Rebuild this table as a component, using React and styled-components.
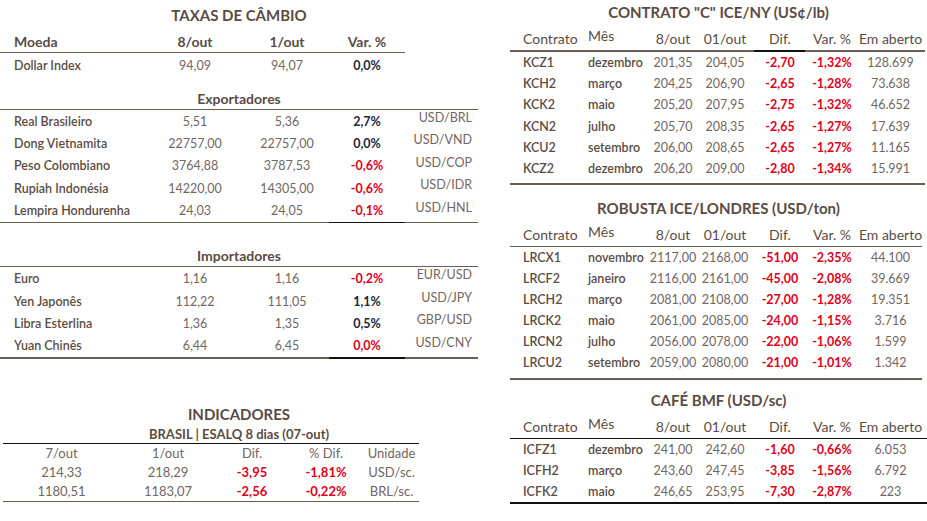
import styled, { createGlobalStyle } from "styled-components";

const BROWN = "#6b5d52";
const TEXT = "#5a4c44";
const GREY = "#72665f";
const RED = "#e0001a";
const NAVY = "#1c2838";

const GlobalStyle = createGlobalStyle`
  body {
    margin: 0;
    background: #fff;
    font-family: Lato, "Noto Sans", sans-serif;
    color: ${TEXT};
  }
`;

const Page = styled.div`
  width: 927px;
  height: 521px;
  display: flex;
  overflow: hidden;
`;

const LeftPanel = styled.div`
  width: 478px;
  display: flex;
  flex-direction: column;
`;

const RightPanel = styled.div`
  width: 417px;
  margin-left: 32px;
  display: flex;
  flex-direction: column;
`;

const PanelTitle = styled.div`
  height: ${(p) => p.$h}px;
  line-height: ${(p) => p.$h}px;
  margin-top: ${(p) => p.$mt || 0}px;
  text-align: center;
  font-size: 15px;
  font-weight: 700;
  white-space: nowrap;
`;

const SubTitle = styled.div`
  height: 18px;
  line-height: 18px;
  text-align: center;
  font-size: 13px;
  font-weight: 700;
`;

const GroupTitle = styled.div`
  height: 20px;
  line-height: 20px;
  margin-top: ${(p) => p.$mt}px;
  text-align: center;
  font-size: 14px;
  font-weight: 700;
  border-bottom: 1.5px solid ${BROWN};
`;

const Rule = styled.div`
  display: flex;
  height: 1.5px;
  width: ${(p) => p.$w || "auto"};
`;

const Seg = styled.div`
  height: 100%;
  width: ${(p) => p.$w}px;
  flex: ${(p) => (p.$w ? "none" : "1")};
  background: ${(p) => p.$c};
`;

/* câmbio */
const FxRow = styled.div`
  display: grid;
  grid-template-columns: 136px 90px 94px 66px 72px;
  padding-left: 14px;
  height: ${(p) => p.$h || 22.4}px;
  align-items: center;
  font-size: 12.5px;
`;

const FxHead = styled(FxRow)`
  width: 405px;
  box-sizing: border-box;
  font-size: 14px;
  font-weight: 700;
  border-bottom: 1.5px solid ${BROWN};
  align-items: end;
  line-height: 20px;
`;

const Name = styled.div`
  font-weight: 600;
  white-space: nowrap;
`;

const Num = styled.div`
  text-align: center;
  color: ${GREY};
`;

const HeadCell = styled.div`
  text-align: ${(p) => p.$align || "center"};
`;

const Var = styled.div`
  text-align: center;
  font-weight: 700;
  color: ${(p) => p.$c};
`;

const Unit = styled.div`
  text-align: right;
  color: ${GREY};
  align-self: start;
  line-height: 16px;
`;

/* indicadores */
const IndTable = styled.div`
  width: 416px;
  margin-left: 3px;
  border-top: 1.5px solid #111;
  border-bottom: 1.5px solid ${BROWN};
`;

const IndRow = styled.div`
  display: grid;
  grid-template-columns: 117px 96px 72px 76px 55px;
  height: 19px;
  align-items: center;
  font-size: 13px;
  color: ${GREY};
  text-align: center;
`;

const IndRed = styled.div`
  color: ${RED};
  font-weight: 700;
`;

/* contratos */
const CtRow = styled.div`
  display: grid;
  grid-template-columns: 65px 60px 50px 54px 56px 48px 69px;
  padding-left: 13px;
  height: ${(p) => p.$h || 21.3}px;
  align-items: center;
  font-size: 12.5px;
`;

const CtHead = styled(CtRow)`
  font-size: 14px;
  margin-top: 4px;
  height: 22px;
  line-height: 20px;
  white-space: nowrap;
`;

const Code = styled.div`
  font-weight: 600;
  white-space: nowrap;
`;

const Month = styled.div`
  font-weight: 600;
  white-space: nowrap;
`;

const Raised = styled.div`
  align-self: start;
  line-height: 16px;
`;

const CtRed = styled.div`
  text-align: center;
  color: ${RED};
  font-weight: 700;
`;

const CtBody = styled.div`
  padding-bottom: ${(p) => p.$pb}px;
`;

const exporters = [
  ["Real Brasileiro", "5,51", "5,36", "2,7%", NAVY, "USD/BRL"],
  ["Dong Vietnamita", "22757,00", "22757,00", "0,0%", NAVY, "USD/VND"],
  ["Peso Colombiano", "3764,88", "3787,53", "-0,6%", RED, "USD/COP"],
  ["Rupiah Indonésia", "14220,00", "14305,00", "-0,6%", RED, "USD/IDR"],
  ["Lempira Hondurenha", "24,03", "24,05", "-0,1%", RED, "USD/HNL"],
];

const importers = [
  ["Euro", "1,16", "1,16", "-0,2%", RED, "EUR/USD"],
  ["Yen Japonês", "112,22", "111,05", "1,1%", NAVY, "USD/JPY"],
  ["Libra Esterlina", "1,36", "1,35", "0,5%", NAVY, "GBP/USD"],
  ["Yuan Chinês", "6,44", "6,45", "0,0%", RED, "USD/CNY"],
];

const iceNy = [
  ["KCZ1", "dezembro", "201,35", "204,05", "-2,70", "-1,32%", "128.699"],
  ["KCH2", "março", "204,25", "206,90", "-2,65", "-1,28%", "73.638"],
  ["KCK2", "maio", "205,20", "207,95", "-2,75", "-1,32%", "46.652"],
  ["KCN2", "julho", "205,70", "208,35", "-2,65", "-1,27%", "17.639"],
  ["KCU2", "setembro", "206,00", "208,65", "-2,65", "-1,27%", "11.165"],
  ["KCZ2", "dezembro", "206,20", "209,00", "-2,80", "-1,34%", "15.991"],
];

const robusta = [
  ["LRCX1", "novembro", "2117,00", "2168,00", "-51,00", "-2,35%", "44.100"],
  ["LRCF2", "janeiro", "2116,00", "2161,00", "-45,00", "-2,08%", "39.669"],
  ["LRCH2", "março", "2081,00", "2108,00", "-27,00", "-1,28%", "19.351"],
  ["LRCK2", "maio", "2061,00", "2085,00", "-24,00", "-1,15%", "3.716"],
  ["LRCN2", "julho", "2056,00", "2078,00", "-22,00", "-1,06%", "1.599"],
  ["LRCU2", "setembro", "2059,00", "2080,00", "-21,00", "-1,01%", "1.342"],
];

const bmf = [
  ["ICFZ1", "dezembro", "241,00", "242,60", "-1,60", "-0,66%", "6.053"],
  ["ICFH2", "março", "243,60", "247,45", "-3,85", "-1,56%", "6.792"],
  ["ICFK2", "maio", "246,65", "253,95", "-7,30", "-2,87%", "223"],
];

const FxRows = ({ rows }) =>
  rows.map((r) => (
    <FxRow key={r[0]}>
      <Name>{r[0]}</Name>
      <Num>{r[1]}</Num>
      <Num>{r[2]}</Num>
      <Var $c={r[4]}>{r[3]}</Var>
      <Unit>{r[5]}</Unit>
    </FxRow>
  ));

const SplitRule = () => (
  <Rule>
    <Seg $w={329} $c={BROWN} />
    <Seg $w={76} $c="#111" />
    <Seg $c={BROWN} />
  </Rule>
);

const CtHeader = () => (
  <CtHead>
    <HeadCell $align="left">Contrato</HeadCell>
    <Raised>Mês</Raised>
    <HeadCell>8/out</HeadCell>
    <HeadCell>01/out</HeadCell>
    <HeadCell>Dif.</HeadCell>
    <HeadCell>Var. %</HeadCell>
    <HeadCell>Em aberto</HeadCell>
  </CtHead>
);

const CtRows = ({ rows, h }) =>
  rows.map((r) => (
    <CtRow key={r[0]} $h={h}>
      <Code>{r[0]}</Code>
      <Month>{r[1]}</Month>
      <Num>{r[2]}</Num>
      <Num>{r[3]}</Num>
      <CtRed>{r[4]}</CtRed>
      <CtRed>{r[5]}</CtRed>
      <Num>{r[6]}</Num>
    </CtRow>
  ));

const App = () => (
  <Page>
    <GlobalStyle />
    <LeftPanel>
      <PanelTitle $h={30}>TAXAS DE CÂMBIO</PanelTitle>
      <FxHead $h={23}>
        <HeadCell $align="left">Moeda</HeadCell>
        <HeadCell>8/out</HeadCell>
        <HeadCell>1/out</HeadCell>
        <HeadCell>Var. %</HeadCell>
      </FxHead>
      <FxRow $h={24}>
        <Name>Dollar Index</Name>
        <Num>94,09</Num>
        <Num>94,07</Num>
        <Var $c={NAVY}>0,0%</Var>
      </FxRow>

      <GroupTitle $mt={12}>Exportadores</GroupTitle>
      <FxRows rows={exporters} />
      <SplitRule />

      <GroupTitle $mt={23}>Importadores</GroupTitle>
      <FxRows rows={importers} />
      <SplitRule />

      <PanelTitle $h={22} $mt={44}>
        INDICADORES
      </PanelTitle>
      <SubTitle>BRASIL | ESALQ 8 dias (07-out)</SubTitle>
      <IndTable>
        <IndRow>
          <div>7/out</div>
          <div>1/out</div>
          <div>Dif.</div>
          <div>% Dif.</div>
          <div>Unidade</div>
        </IndRow>
        <IndRow>
          <div>214,33</div>
          <div>218,29</div>
          <IndRed>-3,95</IndRed>
          <IndRed>-1,81%</IndRed>
          <div>USD/sc.</div>
        </IndRow>
        <IndRow>
          <div>1180,51</div>
          <div>1183,07</div>
          <IndRed>-2,56</IndRed>
          <IndRed>-0,22%</IndRed>
          <div>BRL/sc.</div>
        </IndRow>
      </IndTable>
    </LeftPanel>

    <RightPanel>
      <PanelTitle $h={24}>CONTRATO "C" ICE/NY (US¢/lb)</PanelTitle>
      <CtHeader />
      <Rule $w="415px">
        <Seg $w={244} $c={BROWN} />
        <Seg $w={51} $c="#111" />
        <Seg $c={BROWN} />
      </Rule>
      <CtBody $pb={4}>
        <CtRows rows={iceNy} />
      </CtBody>
      <Rule $w="415px">
        <Seg $c={BROWN} />
      </Rule>

      <PanelTitle $h={24} $mt={11}>
        ROBUSTA ICE/LONDRES (USD/ton)
      </PanelTitle>
      <CtHeader />
      <Rule $w="412px">
        <Seg $c={BROWN} />
      </Rule>
      <CtBody $pb={5}>
        <CtRows rows={robusta} h={21} />
      </CtBody>
      <Rule $w="412px">
        <Seg $c={BROWN} />
      </Rule>

      <PanelTitle $h={24} $mt={8}>
        CAFÉ BMF (USD/sc)
      </PanelTitle>
      <CtHeader />
      <Rule $w="417px">
        <Seg $c="#111" />
      </Rule>
      <CtBody $pb={0}>
        <CtRows rows={bmf} h={21} />
      </CtBody>
      <Rule $w="417px">
        <Seg $c="#111" />
      </Rule>
    </RightPanel>
  </Page>
);

export default App;
